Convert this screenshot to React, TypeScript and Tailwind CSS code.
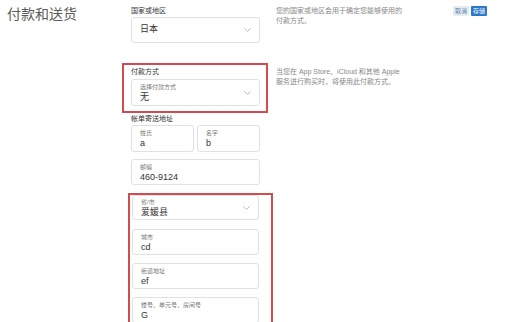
import React from "react";

const Chevron = () => (
  <svg width="7" height="4" viewBox="0 0 7 4" fill="none" className="shrink-0">
    <path d="M0.6 0.6 L3.5 3.4 L6.4 0.6" stroke="#a8a8a8" strokeWidth="0.8" strokeLinecap="round" strokeLinejoin="round" />
  </svg>
);

const Field = ({ label, value, h = "h-[26px]", select = false }: { label: string; value: string; h?: string; select?: boolean }) => (
  <div className={`${h} border border-[#e1e1e1] rounded-[3px] bg-white flex items-center pl-[8px] pr-[8px]`}>
    <div className="flex-1 flex flex-col pt-[1px]">
      <div className="text-[6px] leading-[8px] text-[#777]">{label}</div>
      <div className="text-[9px] leading-[12px] text-[#333]">{value}</div>
    </div>
    {select && <Chevron />}
  </div>
);

export default function App() {
  return (
    <div className="w-[512px] h-[322px] overflow-hidden bg-white flex font-['Liberation_Sans','Noto_Sans_CJK_SC',sans-serif]">
      <div className="w-[131px] shrink-0 pl-[7px] pt-[7px]">
        <div className="text-[14px] leading-[14px] text-[#5a5a5a]">付款和送货</div>
      </div>
      <div className="flex-1 flex flex-col">
        {/* Row 1 */}
        <div className="flex">
          <div className="w-[129px] shrink-0 pt-[6px]">
            <div className="text-[7px] leading-[9px] text-[#333]">国家或地区</div>
            <div className="mt-[2px] h-[26px] border border-[#e1e1e1] rounded-[3px] flex items-center pl-[8px] pr-[8px]">
              <div className="flex-1 text-[9px] text-[#333]">日本</div>
              <Chevron />
            </div>
          </div>
          <div className="ml-[16px] pt-[6px] text-[7px] leading-[10px] text-[#888]">
            <div>您的国家或地区会用于确定您能够使用的</div>
            <div>付款方式。</div>
          </div>
          <div className="ml-auto mr-[25px] pt-[6px] flex gap-[2px]">
            <div className="w-[16px] h-[10px] bg-[#e6ebf0] text-[#5b82ad] text-[6px] leading-[10px] text-center rounded-[1px]">取消</div>
            <div className="w-[16px] h-[10px] bg-[#2a78c8] text-white text-[6px] leading-[10px] text-center rounded-[1px]">存储</div>
          </div>
        </div>
        {/* Row 2 payment */}
        <div className="flex mt-[20px]">
          <div className="w-[129px] shrink-0">
            <div className="-ml-[9px] -mr-[8px] border-2 border-[#d24b4f] pl-[7px] pr-[6px] pt-[2px] pb-[5px]">
              <div className="text-[7px] leading-[9px] text-[#333]">付款方式</div>
              <div className="mt-[3px]">
                <Field label="选择付款方式" value="无" h="h-[27px]" select />
              </div>
            </div>
          </div>
          <div className="ml-[16px] pt-[4px] text-[7px] leading-[10px] text-[#888]">
            <div>当您在 App Store、iCloud 和其他 Apple</div>
            <div>服务进行购买时，将使用此付款方式。</div>
          </div>
        </div>
        {/* Billing */}
        <div className="w-[129px]">
          <div className="mt-[1px] text-[7px] leading-[9px] text-[#333]">帐单寄送地址</div>
          <div className="mt-[2px] grid grid-cols-2 gap-[3px]">
            <Field label="姓氏" value="a" h="h-[27px]" />
            <Field label="名字" value="b" h="h-[27px]" />
          </div>
          <div className="mt-[7px]">
            <Field label="邮编" value="460-9124" />
          </div>
          <div className="mt-[8px] -ml-[3px] -mr-[13px] border-2 border-b-0 border-[#d24b4f] pl-[2px] pr-[12px] h-[140px]">
            <Field label="省/市" value="爱媛县" h="h-[25px]" select />
            <div className="mt-[9px]">
              <Field label="城市" value="cd" />
            </div>
            <div className="mt-[8px]">
              <Field label="街道地址" value="ef" />
            </div>
            <div className="mt-[8px]">
              <Field label="楼号、单元号、房间号" value="G" />
            </div>
          </div>
        </div>
      </div>
    </div>
  );
}
